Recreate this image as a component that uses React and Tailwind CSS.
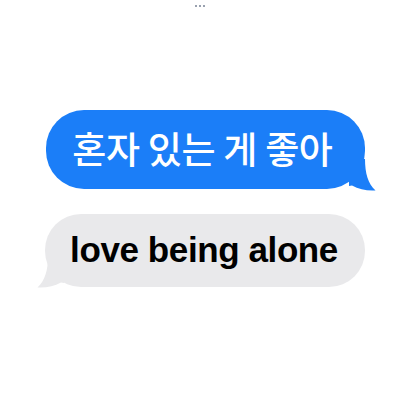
export default function App() {
  return (
    <div className="w-[400px] h-[400px] bg-white flex flex-col relative" style={{ fontFamily: '"Liberation Sans", "Noto Sans CJK KR", sans-serif' }}>
      <div className="flex justify-center gap-[1px] pt-[5px] h-[8px]">
        <div className="w-[2px] h-[2px] bg-gray-400" />
        <div className="w-[2px] h-[2px] bg-gray-400 ml-[1px]" />
        <div className="w-[2px] h-[2px] bg-gray-400 ml-[1px]" />
      </div>
      <div className="relative ml-[46px] mt-[102px] w-[319px] h-[79px]">
        <div className="relative z-10 w-full h-full rounded-[38px] bg-[#1b7ef8] flex items-center justify-center pr-[6px]">
          <span className="text-white text-[37px] font-medium leading-none tracking-[-0.3px] pb-[2px]" style={{ fontFamily: '"Noto Sans CJK KR", sans-serif' }}>혼자 있는 게 좋아</span>
        </div>
        <svg className="absolute right-[-11px] bottom-[-2px] z-20" width="27" height="32" viewBox="0 0 27 32">
          <path d="M0 0 H16 C16 14 19 25 26.5 31.5 C18 32 10 30.5 3 26.5 L0 27 Z" fill="#1b7ef8" />
        </svg>
      </div>
      <div className="relative ml-[45px] mt-[25px] w-[320px] h-[73px]">
        <div className="relative z-10 w-full h-full rounded-[36px] bg-[#e9e9eb] flex items-center justify-center pr-[2px]">
          <span className="text-black text-[35px] font-bold leading-none tracking-[-0.4px] pb-[2px]">love being alone</span>
        </div>
        <svg className="absolute left-[-8px] bottom-[-1px] z-20 -scale-x-100" width="27" height="32" viewBox="0 0 27 32">
          <path d="M0 0 H16 C16 14 19 25 26.5 31.5 C18 32 10 30.5 3 26.5 L0 27 Z" fill="#e9e9eb" />
        </svg>
      </div>
    </div>
  );
}
